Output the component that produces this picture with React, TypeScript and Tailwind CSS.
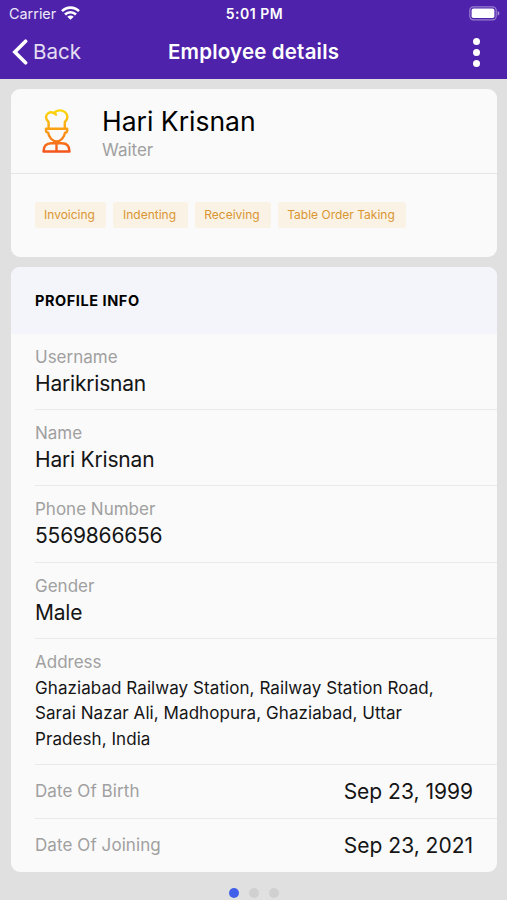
import React from 'react'

interface Field {
  label: string
  value: string
}

const SKILLS = [
  { name: 'Invoicing', className: 'w-[71px]' },
  { name: 'Indenting', className: 'w-[75px]' },
  { name: 'Receiving', className: 'w-[76px]' },
  { name: 'Table Order Taking', className: 'w-[128px]' },
]

const FIELDS: Field[] = [
  { label: 'Username', value: 'Harikrisnan' },
  { label: 'Name', value: 'Hari Krisnan' },
  { label: 'Phone Number', value: '5569866656' },
  { label: 'Gender', value: 'Male' },
]

const ADDRESS = [
  'Ghaziabad Railway Station, Railway Station Road,',
  'Sarai Nazar Ali, Madhopura, Ghaziabad, Uttar',
  'Pradesh, India',
]

function WifiIcon() {
  return (
    <svg width="19" height="14" viewBox="0 0 19 14" fill="none" stroke="white" strokeWidth="2.6">
      <path d="M1 5.2C5.8 .4 13.2 .4 18 5.2" />
      <path d="M4 8.5c3.1-3.1 7.9-3.1 11 0" />
      <path d="M9.5 13.8 6.3 10.7c1.8-1.6 4.6-1.6 6.4 0z" fill="white" stroke="none" />
    </svg>
  )
}

function BatteryIcon() {
  return (
    <svg width="31" height="15" viewBox="0 0 31 15" fill="none">
      <rect x=".8" y=".8" width="26.4" height="13" rx="3.6" stroke="white" strokeOpacity=".42" strokeWidth="1.2" />
      <rect x="2.6" y="2.6" width="22.8" height="9.4" rx="1.8" fill="white" />
      <path d="M28.6 5v4.6c1.2-.4 1.8-1.3 1.8-2.3S29.800 5.400 28.600 5z" fill="white" fillOpacity=".5" />
    </svg>
  )
}

function ChefIcon() {
  return (
    <svg width="29" height="44" viewBox="0 0 29 44" fill="none" stroke="url(#chef)" strokeWidth="2.4" strokeLinejoin="round" strokeLinecap="round">
      <defs>
        <linearGradient id="chef" x1="0" y1="0" x2="0" y2="44" gradientUnits="userSpaceOnUse">
          <stop offset="0" stopColor="#fbdc0c" />
          <stop offset=".5" stopColor="#fb9a14" />
          <stop offset="1" stopColor="#f4511e" />
        </linearGradient>
      </defs>
      {/* hat */}
      <path d="M6.6 19V13C4.8 11.600 3.900 9.800 4.100 7.600C4.500 4 8.200 2.200 12 4.100C14 1.800 17 .9 20 1.600C24.300 2.600 26.300 6.700 24.800 10.300C24.300 11.500 23.600 12.400 22.800 13V19" />
      <path d="M12 4.100C13 4.400 13.600 4.900 14 5.600" />
      {/* face */}
      <path d="M4 19.700H25.200V21.700C25.200 22.900 24.400 23.600 23 23.600C22.500 28.200 18.700 32.400 14.600 32.400C10.500 32.400 6.700 28.200 6.200 23.600C4.800 23.600 4 22.900 4 21.700Z" />
      {/* shoulders */}
      <path d="M14.500 34.200H9C4.200 34.200 1.500 37.200 1.500 42.500H27.500C27.500 37.200 24.800 34.200 20 34.200H14.500V42.500" />
    </svg>
  )
}

function Header() {
  return (
    <header className="h-[79px] bg-[#4e22ab] text-white">
      <div className="flex h-[27px] items-center px-[9px]">
        <div className="flex flex-1 items-center gap-[5px] text-[14.4px] text-white/90">
          <span className="pt-px">Carrier</span>
          <WifiIcon />
        </div>
        <div className="text-[14px] font-semibold tracking-[0.5px]">5:01 PM</div>
        <div className="flex flex-1 justify-end -mr-0.5">
          <BatteryIcon />
        </div>
      </div>
      <div className="flex h-[50px] items-center">
        <div className="flex w-[168px] items-center gap-[5px] pl-3">
          <svg width="16" height="26" viewBox="0 0 16 26" fill="none" stroke="white" strokeWidth="3.6" strokeLinecap="round">
            <path d="M13.6 2.2 2.8 13l10.8 10.8" />
          </svg>
          <span className="text-[20.5px] text-white/85">Back</span>
        </div>
        <h1 className="pt-px text-[20.5px] font-semibold tracking-[0.18px] whitespace-nowrap">Employee details</h1>
        <div className="flex flex-1 justify-end pr-[27px]">
          <div className="flex flex-col gap-1">
            <span className="size-[7px] rounded-full bg-white" />
            <span className="size-[7px] rounded-full bg-white" />
            <span className="size-[7px] rounded-full bg-white" />
          </div>
        </div>
      </div>
    </header>
  )
}

function SummaryCard() {
  return (
    <section className="h-[168px] rounded-[9px] bg-[#fafafa]">
      <div className="flex h-[85px] border-b border-[#e6e6e6] pl-[31px]">
        <div className="w-[60px] pt-5">
          <ChefIcon />
        </div>
        <div className="pt-[15px]">
          <h2 className="text-[26.5px] leading-[34px] text-black">Hari Krisnan</h2>
          <p className="text-[17px] leading-6 text-[#a0a0a0]">Waiter</p>
        </div>
      </div>
      <div className="flex gap-[7px] pt-7 pl-6">
        {SKILLS.map((skill) => (
          <span
            key={skill.name}
            className={`${skill.className} h-[26px] rounded-[3px] bg-[#faf2e4] pr-0.5 text-center text-[12px] leading-[25px] whitespace-nowrap text-[#d99532]`}
          >
            {skill.name}
          </span>
        ))}
      </div>
    </section>
  )
}

function DateRow({ label, value }: Field) {
  return (
    <div className="flex h-[53.5px] items-center justify-between border-b border-[#e9e9e9] pr-6 last:border-b-0">
      <span className="text-[17px] tracking-[0.08px] text-[#a0a0a0]">{label}</span>
      <span className="text-[21px] leading-[30px] text-[#151515]">{value}</span>
    </div>
  )
}

function ProfileCard() {
  return (
    <section className="h-[605px] overflow-hidden rounded-[9px] bg-[#fafafa]">
      <h3 className="h-[67px] bg-[#f3f5fa] pl-6 text-[14.5px] leading-[67px] font-bold tracking-[0.56px] text-black">PROFILE INFO</h3>
      <div className="pl-6">
        {FIELDS.map((field) => (
          <div key={field.label} className="h-[76.2px] border-b border-[#e9e9e9] pt-[11px]">
            <div className="text-[17px] leading-6 text-[#a0a0a0]">{field.label}</div>
            <div className="text-[21px] leading-[30px] tracking-[-0.2px] text-[#151515]">{field.value}</div>
          </div>
        ))}
        <div className="h-[126.5px] border-b border-[#e9e9e9] pt-[11px]">
          <div className="text-[17px] leading-6 text-[#a0a0a0]">Address</div>
          <div className="pt-0.5 text-[17px] leading-[25.5px] tracking-[0.07px] text-[#151515]">
            {ADDRESS.map((line) => (
              <div key={line} className="whitespace-nowrap">{line}</div>
            ))}
          </div>
        </div>
        <DateRow label="Date Of Birth" value="Sep 23, 1999" />
        <DateRow label="Date Of Joining" value="Sep 23, 2021" />
      </div>
    </section>
  )
}

export default function App() {
  return (
    <div className="h-[900px] w-[507px] overflow-hidden bg-[#e0e0e0] font-['Inter','Liberation_Sans',sans-serif]">
      <Header />
      <main className="flex flex-col gap-2.5 pt-2.5 pr-2.5 pl-[11px]">
        <SummaryCard />
        <ProfileCard />
      </main>
      {/* page indicator */}
      <div className="flex justify-center gap-2.5 pt-4">
        <span className="size-2.5 rounded-full bg-[#4160ea]" />
        <span className="size-2.5 rounded-full bg-[#d0d0d0]" />
        <span className="size-2.5 rounded-full bg-[#d0d0d0]" />
      </div>
    </div>
  )
}
